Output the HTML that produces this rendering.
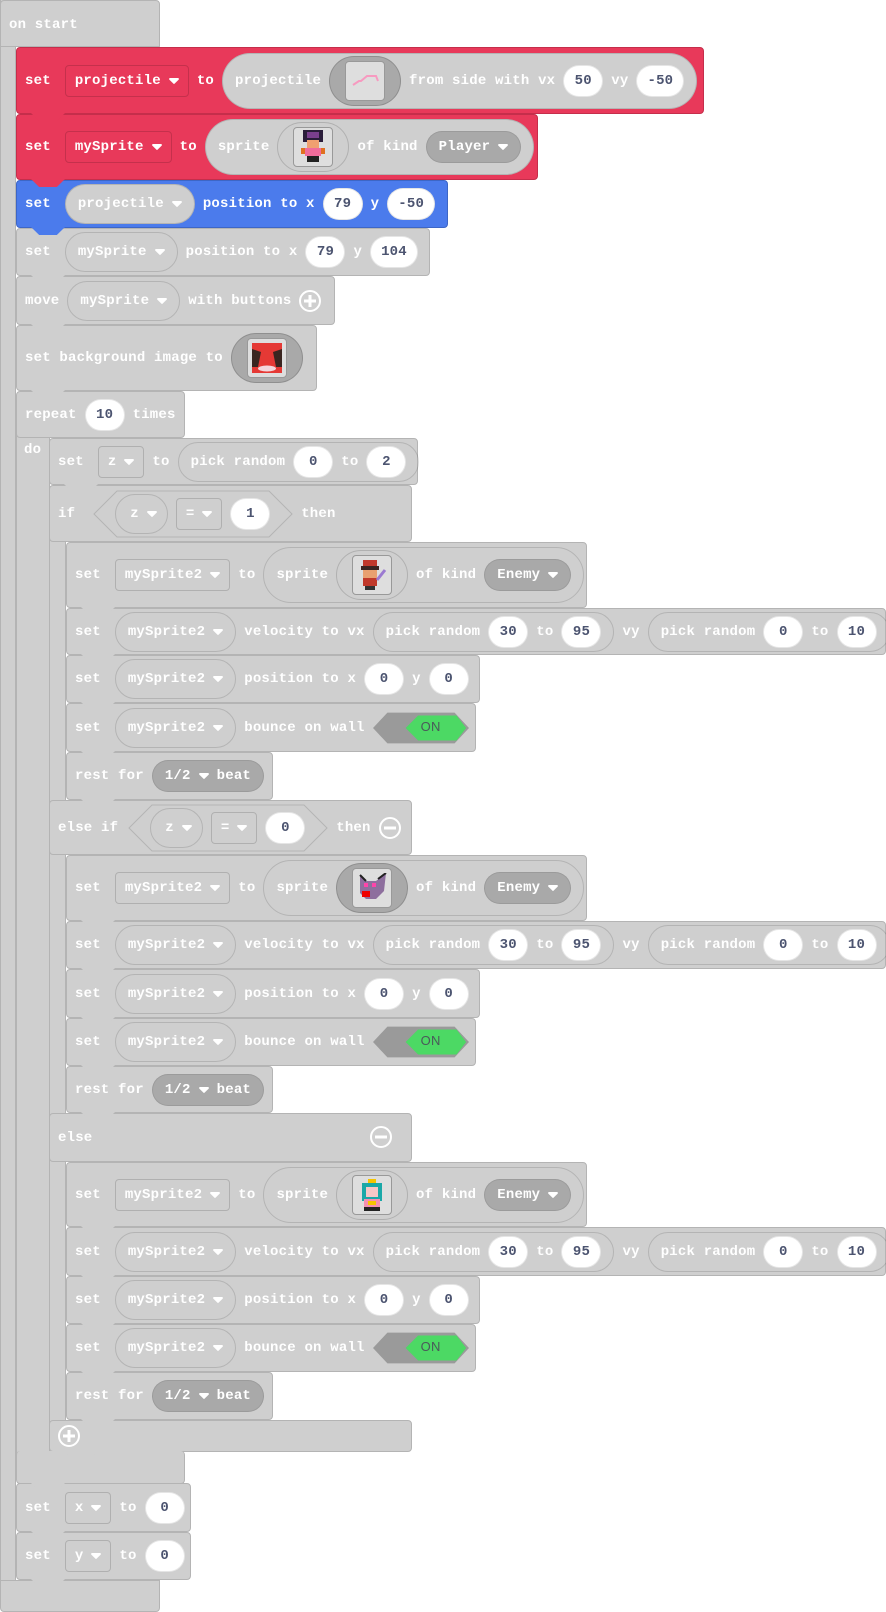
<!DOCTYPE html>
<html><head><meta charset="utf-8"><style>
body{margin:0;width:886px;height:1612px;background:#fff;position:relative;overflow:hidden;font:bold 14px "Liberation Mono","DejaVu Sans Mono",monospace;color:#fff;letter-spacing:0.2px}
.b{position:absolute;display:flex;align-items:center;gap:8px;padding-left:8px;box-sizing:border-box;background:#cfcfcf;border:1px solid #b4b4b4;border-radius:4px;white-space:nowrap}
.b.t::after{content:'';position:absolute;left:14px;bottom:-8px;width:34px;height:8px;background:inherit;clip-path:polygon(0 0,100% 0,76% 100%,24% 100%);z-index:5}
.red{background:#e8395a;border-color:#c52e4b}
.blue{background:#4b7bec;border-color:#3d66c6}
.dd{height:32px;display:flex;align-items:center;gap:8px;padding:0 9px;border:1px solid rgba(0,0,0,.15);border-radius:4px;box-sizing:border-box}
.pill{display:flex;align-items:center;gap:8px;height:40px;padding:0 12px 0 12px;border:1px solid rgba(0,0,0,.13);border-radius:22px;box-sizing:border-box}
.big{height:56px;border-radius:30px}
.num{background:#fff;color:#4c5470;height:32px;min-width:40px;padding:0 10px;border-radius:16px;display:flex;align-items:center;justify-content:center;box-sizing:border-box;border:1px solid rgba(0,0,0,.1)}
.dk{background:#a9a9a9;height:32px;border-radius:16px;padding:0 12px;display:flex;align-items:center;gap:8px;border:1px solid rgba(0,0,0,.08);box-sizing:border-box}
.sh{width:72px;height:50px;border-radius:25px;display:flex;align-items:center;justify-content:center;border:1px solid rgba(0,0,0,.15);box-sizing:border-box}
.sh.d{background:#a9a9a9}
.sq{width:40px;height:40px;background:#dedede;border:1px solid #999;border-radius:4px;box-sizing:border-box;display:flex;align-items:center;justify-content:center}
.arm{position:absolute;background:#cfcfcf;border-left:1px solid #b4b4b4;border-right:1px solid #b4b4b4;box-sizing:border-box}
.ic{width:22px;height:22px}
</style></head><body>
<svg width="0" height="0" style="position:absolute"><defs><symbol id="c" viewBox="0 0 10 6"><path d="M1 0h8a1 1 0 0 1 .7 1.6L5.6 5.6a.8.8 0 0 1-1.2 0L.3 1.6A1 1 0 0 1 1 0z" fill="#fff"/></symbol>
<symbol id="tg" viewBox="0 0 100 32"><path d="M0 16L15 0h70l15 16-15 16H15z" fill="#9a9a9a"/><path d="M34 16L47 3h40l10 13-10 13H47z" fill="#4cd964"/></symbol></defs></svg>

<div class="arm" style="left:0;top:0;width:16px;height:1600px"></div>
<div class="b" style="left:0;top:0;width:160px;height:47px;align-items:flex-start;padding-top:16px;border-radius:4px 4px 0 0">on start</div>
<div class="b" style="left:0;top:1580px;width:160px;height:32px;border-radius:0 0 4px 4px"></div>

<div class="arm" style="left:16px;top:420px;width:34px;height:1050px"></div>
<div class="arm" style="left:49px;top:520px;width:17px;height:920px"></div>

<div class="b t red" style="left:16px;top:47px;width:688px;height:67px">
 <span style="margin-right:6px">set</span>
 <div class="dd">projectile<svg width="10" height="6"><use href="#c"/></svg></div>
 <span>to</span>
 <div class="pill big" style="background:#cfcfcf">projectile
  <div class="sh d"><div class="sq"><svg width="30" height="20"><path d="M3 14l6-4h2l6-5h9l2 5" fill="none" stroke="#f79ac0" stroke-width="2"/></svg></div></div>
  from side with vx <div class="num">50</div> vy <div class="num">-50</div></div>
</div>
<div class="b t red" style="left:16px;top:114px;width:522px;height:66px">
 <span style="margin-right:6px">set</span>
 <div class="dd">mySprite<svg width="10" height="6"><use href="#c"/></svg></div>
 <span>to</span>
 <div class="pill big" style="background:#cfcfcf">sprite
  <div class="sh"><div class="sq"><svg width="28" height="34" viewBox="0 0 14 17"><rect x="2" y="0" width="10" height="6" fill="#2a1d3a"/><rect x="4" y="1" width="6" height="3" fill="#7a3f8e"/><rect x="4" y="5" width="6" height="4" fill="#f0a070"/><rect x="3" y="9" width="8" height="4" fill="#f06c9b"/><rect x="1" y="9" width="2" height="3" fill="#e07020"/><rect x="11" y="9" width="2" height="3" fill="#e07020"/><rect x="4" y="13" width="6" height="3" fill="#222"/></svg></div></div>
  of kind <div class="dk">Player<svg width="10" height="6"><use href="#c"/></svg></div></div>
</div>
<div class="b t blue" style="left:16px;top:180px;width:432px;height:48px">
 <span style="margin-right:6px">set</span>
 <div class="pill" style="background:#cfcfcf">projectile<svg width="10" height="6"><use href="#c"/></svg></div>
 position to x <div class="num">79</div> y <div class="num">-50</div>
</div>
<div class="b t" style="left:16px;top:228px;width:414px;height:48px">
 <span style="margin-right:6px">set</span>
 <div class="pill">mySprite<svg width="10" height="6"><use href="#c"/></svg></div>
 position to x <div class="num">79</div> y <div class="num">104</div>
</div>
<div class="b t" style="left:16px;top:276px;width:319px;height:49px">
 <span>move</span>
 <div class="pill">mySprite<svg width="10" height="6"><use href="#c"/></svg></div>
 with buttons <svg class="ic" viewBox="0 0 22 22"><circle cx="11" cy="11" r="10" fill="none" stroke="#fff" stroke-width="2"/><path d="M11 5v12M5 11h12" stroke="#fff" stroke-width="3"/></svg>
</div>
<div class="b t" style="left:16px;top:325px;width:301px;height:66px">
 set background image to
 <div class="sh d"><div class="sq"><svg width="30" height="30" viewBox="0 0 10 10"><rect width="10" height="10" fill="#e53935"/><path d="M0 2l3 1-1 5H0z" fill="#3a2520"/><path d="M10 2l-3 1 1 5h2z" fill="#3a2520"/><ellipse cx="5" cy="8.5" rx="3" ry="1" fill="#f3d7dc"/></svg></div></div>
</div>
<div class="b" style="left:16px;top:391px;width:169px;height:47px">repeat <div class="num">10</div> times</div>
<div style="position:absolute;left:24px;top:442px">do</div>
<div class="b t" style="left:49px;top:438px;width:369px;height:47px">
 <span style="margin-right:6px">set</span>
 <div class="dd">z<svg width="10" height="6"><use href="#c"/></svg></div>
 to <div class="pill">pick random <div class="num">0</div> to <div class="num">2</div></div>
</div>

<div class="b" style="left:49px;top:485px;width:363px;height:57px">
 <span style="margin-right:10px">if</span>
 <div style="position:relative;height:48px;width:200px;display:flex;align-items:center;gap:8px;padding-left:22px;box-sizing:border-box"><svg style="position:absolute;left:0;top:0" width="200" height="48"><path d="M1 24L24 1h152l23 23-23 23H24z" fill="#cfcfcf" stroke="#b4b4b4"/></svg>
  <div class="pill" style="position:relative;padding:0 10px 0 14px">z<svg width="10" height="6"><use href="#c"/></svg></div>
  <div class="dd" style="position:relative">=<svg width="10" height="6"><use href="#c"/></svg></div>
  <div class="num" style="position:relative">1</div></div>
 then
</div>
<div class="b" style="left:49px;top:800px;width:363px;height:55px">
 <span style="margin-right:10px">else if</span>
 <div style="position:relative;height:48px;width:200px;display:flex;align-items:center;gap:8px;padding-left:22px;box-sizing:border-box;margin-left:-8px"><svg style="position:absolute;left:0;top:0" width="200" height="48"><path d="M1 24L24 1h152l23 23-23 23H24z" fill="#cfcfcf" stroke="#b4b4b4"/></svg>
  <div class="pill" style="position:relative;padding:0 10px 0 14px">z<svg width="10" height="6"><use href="#c"/></svg></div>
  <div class="dd" style="position:relative">=<svg width="10" height="6"><use href="#c"/></svg></div>
  <div class="num" style="position:relative">0</div></div>
 then <svg class="ic" viewBox="0 0 22 22"><circle cx="11" cy="11" r="10" fill="none" stroke="#fff" stroke-width="2"/><path d="M5 11h12" stroke="#fff" stroke-width="3"/></svg>
</div>
<div class="b" style="left:49px;top:1113px;width:363px;height:49px">else<svg class="ic" style="position:absolute;left:320px;top:12px" viewBox="0 0 22 22"><circle cx="11" cy="11" r="10" fill="none" stroke="#fff" stroke-width="2"/><path d="M5 11h12" stroke="#fff" stroke-width="3"/></svg></div>
<div class="b t" style="left:49px;top:1420px;width:363px;height:32px"><svg class="ic" style="position:absolute;left:8px;top:4px" viewBox="0 0 22 22"><circle cx="11" cy="11" r="10" fill="none" stroke="#fff" stroke-width="2"/><path d="M11 5v12M5 11h12" stroke="#fff" stroke-width="3"/></svg></div>
<div class="b t" style="left:16px;top:1451px;width:169px;height:33px;border-top:none"></div>

<div class="b t" style="left:66px;top:542px;width:521px;height:66px">
 <span style="margin-right:6px">set</span><div class="dd">mySprite2<svg width="10" height="6"><use href="#c"/></svg></div> to
 <div class="pill big">sprite <div class="sh"><div class="sq"><svg width="30" height="30" viewBox="0 0 15 15"><rect x="3" y="0" width="7" height="4" fill="#c0392b"/><rect x="2" y="3" width="9" height="2" fill="#3a2520"/><rect x="3" y="5" width="7" height="4" fill="#e8a070"/><rect x="3" y="9" width="7" height="4" fill="#c0392b"/><path d="M10 10l4-5" stroke="#9b7ad1" stroke-width="1.5"/><rect x="4" y="13" width="5" height="2" fill="#333"/></svg></div></div> of kind <div class="dk">Enemy<svg width="10" height="6"><use href="#c"/></svg></div></div>
</div>
<div class="b t" style="left:66px;top:608px;width:820px;height:47px">
 <span style="margin-right:6px">set</span><div class="pill">mySprite2<svg width="10" height="6"><use href="#c"/></svg></div> velocity to vx
 <div class="pill">pick random <div class="num">30</div> to <div class="num">95</div></div> vy
 <div class="pill">pick random <div class="num">0</div> to <div class="num">10</div></div>
</div>
<div class="b t" style="left:66px;top:655px;width:414px;height:48px">
 <span style="margin-right:6px">set</span><div class="pill">mySprite2<svg width="10" height="6"><use href="#c"/></svg></div> position to x <div class="num">0</div> y <div class="num">0</div>
</div>
<div class="b t" style="left:66px;top:703px;width:410px;height:49px">
 <span style="margin-right:6px">set</span><div class="pill">mySprite2<svg width="10" height="6"><use href="#c"/></svg></div> bounce on wall
 <div style="position:relative;width:96px;height:32px"><svg width="96" height="32"><use href="#tg"/></svg><span style="position:absolute;left:48px;top:7px;font:13px 'Liberation Sans',sans-serif;color:#4a5a5a">ON</span></div>
</div>
<div class="b t" style="left:66px;top:752px;width:207px;height:48px">rest for <div class="dk">1/2<svg width="10" height="6"><use href="#c"/></svg>beat</div></div>

<div class="b t" style="left:66px;top:855px;width:521px;height:66px">
 <span style="margin-right:6px">set</span><div class="dd">mySprite2<svg width="10" height="6"><use href="#c"/></svg></div> to
 <div class="pill big">sprite <div class="sh d"><div class="sq"><svg width="32" height="30" viewBox="0 0 16 15"><path d="M2 1l3 3h5l5-4-1 9-4 4H5L2 10z" fill="#8e6f9e"/><rect x="4" y="5" width="2" height="2" fill="#f4a"/><rect x="8" y="5" width="2" height="2" fill="#f4a"/><rect x="3" y="9" width="4" height="3" fill="#e00"/><path d="M2 1l3 3M11 3l4-3" stroke="#222"/></svg></div></div> of kind <div class="dk">Enemy<svg width="10" height="6"><use href="#c"/></svg></div></div>
</div>
<div class="b t" style="left:66px;top:921px;width:820px;height:48px">
 <span style="margin-right:6px">set</span><div class="pill">mySprite2<svg width="10" height="6"><use href="#c"/></svg></div> velocity to vx
 <div class="pill">pick random <div class="num">30</div> to <div class="num">95</div></div> vy
 <div class="pill">pick random <div class="num">0</div> to <div class="num">10</div></div>
</div>
<div class="b t" style="left:66px;top:969px;width:414px;height:49px">
 <span style="margin-right:6px">set</span><div class="pill">mySprite2<svg width="10" height="6"><use href="#c"/></svg></div> position to x <div class="num">0</div> y <div class="num">0</div>
</div>
<div class="b t" style="left:66px;top:1018px;width:410px;height:48px">
 <span style="margin-right:6px">set</span><div class="pill">mySprite2<svg width="10" height="6"><use href="#c"/></svg></div> bounce on wall
 <div style="position:relative;width:96px;height:32px"><svg width="96" height="32"><use href="#tg"/></svg><span style="position:absolute;left:48px;top:7px;font:13px 'Liberation Sans',sans-serif;color:#4a5a5a">ON</span></div>
</div>
<div class="b t" style="left:66px;top:1066px;width:207px;height:47px">rest for <div class="dk">1/2<svg width="10" height="6"><use href="#c"/></svg>beat</div></div>

<div class="b t" style="left:66px;top:1162px;width:521px;height:65px">
 <span style="margin-right:6px">set</span><div class="dd">mySprite2<svg width="10" height="6"><use href="#c"/></svg></div> to
 <div class="pill big">sprite <div class="sh"><div class="sq"><svg width="28" height="32" viewBox="0 0 14 16"><rect x="5" y="0" width="4" height="2" fill="#f5c400"/><rect x="2" y="2" width="10" height="9" fill="#1aa8a8"/><rect x="4" y="4" width="6" height="5" fill="#f7c7c7"/><rect x="3" y="10" width="8" height="4" fill="#f48fb1"/><rect x="5" y="11" width="4" height="2" fill="#f5c400"/><rect x="3" y="14" width="8" height="2" fill="#222"/></svg></div></div> of kind <div class="dk">Enemy<svg width="10" height="6"><use href="#c"/></svg></div></div>
</div>
<div class="b t" style="left:66px;top:1227px;width:820px;height:49px">
 <span style="margin-right:6px">set</span><div class="pill">mySprite2<svg width="10" height="6"><use href="#c"/></svg></div> velocity to vx
 <div class="pill">pick random <div class="num">30</div> to <div class="num">95</div></div> vy
 <div class="pill">pick random <div class="num">0</div> to <div class="num">10</div></div>
</div>
<div class="b t" style="left:66px;top:1276px;width:414px;height:48px">
 <span style="margin-right:6px">set</span><div class="pill">mySprite2<svg width="10" height="6"><use href="#c"/></svg></div> position to x <div class="num">0</div> y <div class="num">0</div>
</div>
<div class="b t" style="left:66px;top:1324px;width:410px;height:48px">
 <span style="margin-right:6px">set</span><div class="pill">mySprite2<svg width="10" height="6"><use href="#c"/></svg></div> bounce on wall
 <div style="position:relative;width:96px;height:32px"><svg width="96" height="32"><use href="#tg"/></svg><span style="position:absolute;left:48px;top:7px;font:13px 'Liberation Sans',sans-serif;color:#4a5a5a">ON</span></div>
</div>
<div class="b t" style="left:66px;top:1372px;width:207px;height:48px">rest for <div class="dk">1/2<svg width="10" height="6"><use href="#c"/></svg>beat</div></div>

<div class="b t" style="left:16px;top:1483px;width:175px;height:49px">
 <span style="margin-right:6px">set</span><div class="dd">x<svg width="10" height="6"><use href="#c"/></svg></div> to <div class="num">0</div>
</div>
<div class="b t" style="left:16px;top:1532px;width:175px;height:48px">
 <span style="margin-right:6px">set</span><div class="dd">y<svg width="10" height="6"><use href="#c"/></svg></div> to <div class="num">0</div>
</div>
</body></html>
